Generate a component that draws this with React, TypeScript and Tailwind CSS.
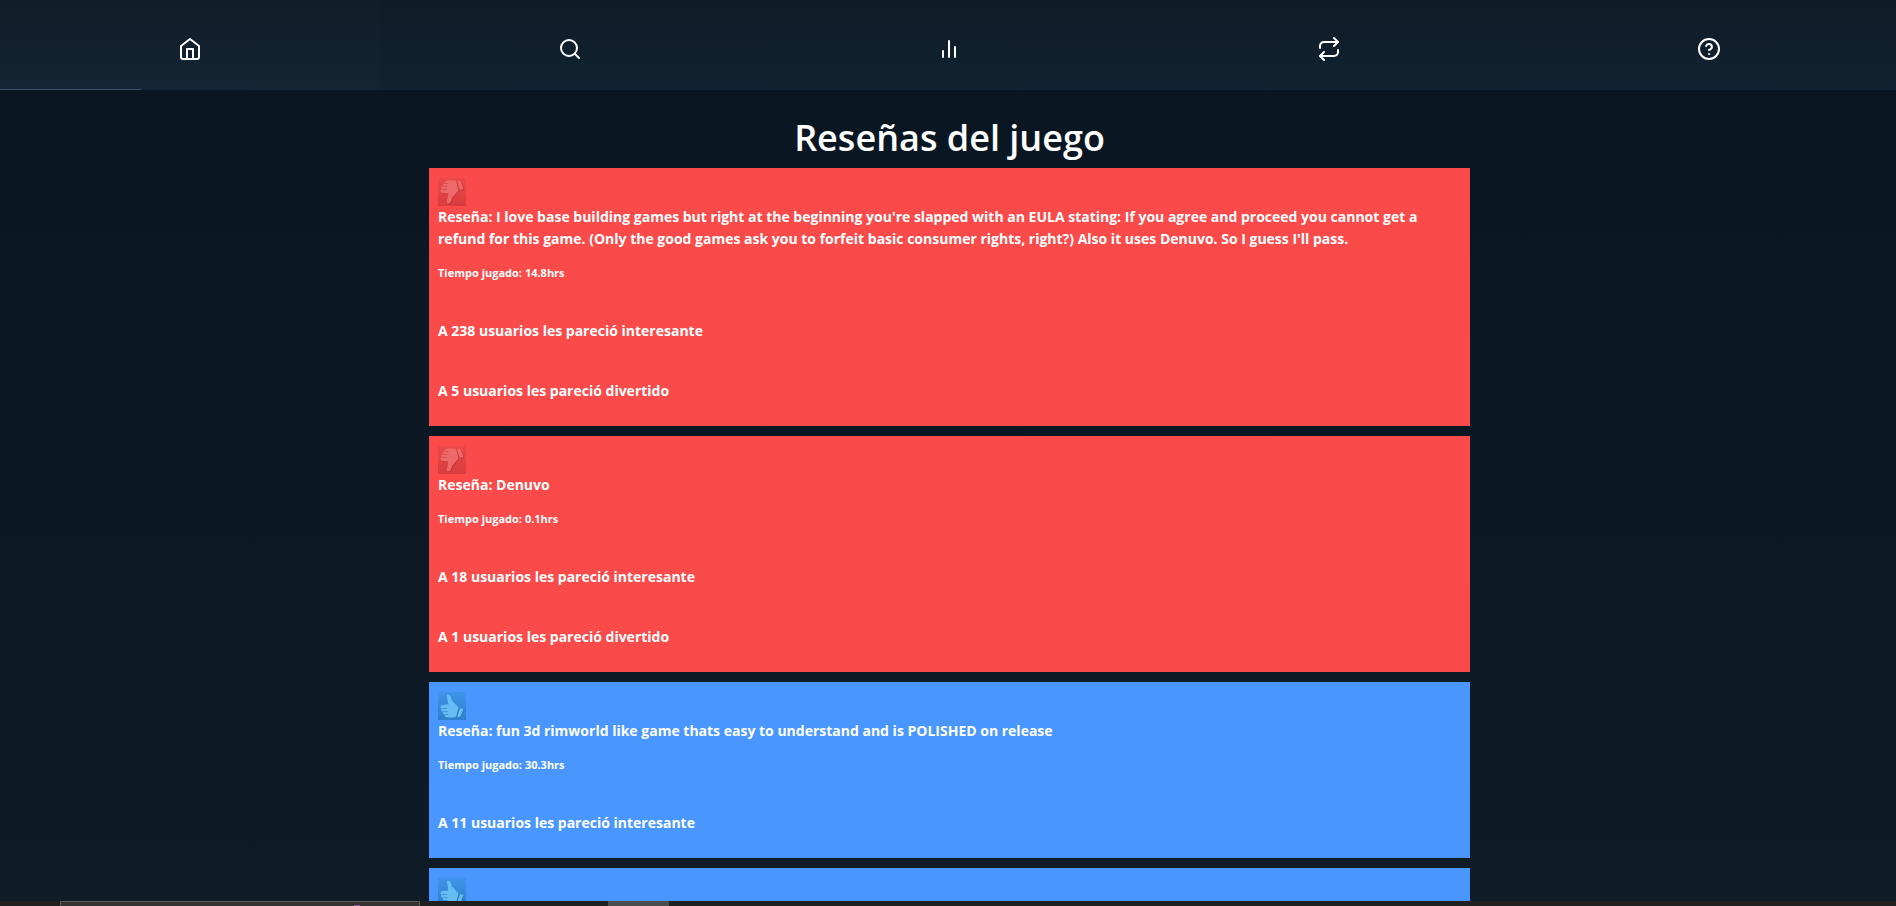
import React from "react";
import { FiBarChart2, FiHelpCircle, FiHome, FiRepeat, FiSearch } from "react-icons/fi";

type Review = {
  positive: boolean;
  text: string;
  hours: string;
  helpful: number;
  funny?: number;
};

const reviews: Review[] = [
  {
    positive: false,
    text: "I love base building games but right at the beginning you're slapped with an EULA stating: If you agree and proceed you cannot get a refund for this game. (Only the good games ask you to forfeit basic consumer rights, right?) Also it uses Denuvo. So I guess I'll pass.",
    hours: "14.8",
    helpful: 238,
    funny: 5,
  },
  { positive: false, text: "Denuvo", hours: "0.1", helpful: 18, funny: 1 },
  {
    positive: true,
    text: "fun 3d rimworld like game thats easy to understand and is POLISHED on release",
    hours: "30.3",
    helpful: 11,
  },
];

const links = [
  { label: "Inicio", Icon: FiHome },
  { label: "Buscar", Icon: FiSearch },
  { label: "Estadísticas", Icon: FiBarChart2 },
  { label: "Comparar", Icon: FiRepeat },
  { label: "Ayuda", Icon: FiHelpCircle },
];

const HAND =
  "M9 3C10.6 2.2 12.2 3 12.8 4.600L14.200 8.600L20.600 15.500L18 25C16 25.800 11.500 25.700 9 25.200C7 24.900 6.300 23.700 6.800 22.500C5 22.200 4.300 20.900 4.900 19.700C3.200 19.300 2.700 17.800 3.400 16.700C2 15.900 2.300 13.300 4.300 12.900L10.200 12.400C10.400 9.500 8.700 6 9 3Z";
const CUFF = "M22 16.300C23.200 16.100 24.500 16.500 25.500 17.100L22.500 24.600C21.400 25.200 20.200 25.300 19.200 25Z";

function Thumb({ up }: { up: boolean }) {
  return (
    <svg viewBox="0 0 28 28" className="block size-7" aria-hidden="true">
      <defs>
        <linearGradient id={up ? "thumb-up" : "thumb-down"} x1="0" y1="0" x2="0" y2="1">
          <stop offset="0" stopColor={up ? "#3f93ea" : "#ec4a4a"} />
          <stop offset="1" stopColor={up ? "#2f7fcb" : "#d83c3c"} />
        </linearGradient>
      </defs>
      <rect width="28" height="28" fill={up ? "url(#thumb-up)" : "url(#thumb-down)"} />
      <g transform={up ? undefined : "matrix(1 0 0 -1 0 28)"}>
        <g
          fill={up ? "#2a78c0" : "#c43639"}
          transform={up ? "translate(0.8 0.8)" : "translate(0.8 -0.8)"}
        >
          <path d={HAND} />
          <path d={CUFF} />
        </g>
        <g fill={up ? "#66bdf4" : "#ee6a6a"}>
          <path d={HAND} />
          <path d={CUFF} />
        </g>
        <path
          d="M3.400 16.500h5.600M4.900 19.600h4.600M6.800 22.500h3.400"
          stroke={up ? "#3d8fd8" : "#d84a4a"}
          strokeWidth="0.9"
        />
      </g>
    </svg>
  );
}

function ReviewCard({ review }: { review: Review }) {
  return (
    <article
      className={`px-[9px] pt-2.5 pb-6 text-sm/[22px] font-bold ${
        review.positive ? "bg-[#4997fe]" : "bg-[#fb4a4a]"
      }`}
    >
      <Thumb up={review.positive} />
      <p>Reseña: {review.text}</p>
      <p className="mt-3 text-[11px]/[22px]">Tiempo jugado: {review.hours}hrs</p>
      <p className="mt-9">A {review.helpful} usuarios les pareció interesante</p>
      {review.funny !== undefined && (
        <p className="mt-[38px]">A {review.funny} usuarios les pareció divertido</p>
      )}
    </article>
  );
}

export default function App() {
  return (
    <div className="flex h-screen flex-col overflow-hidden bg-linear-to-b from-[#091622] to-[#0f1c28] font-['Open_Sans','Noto_Sans',sans-serif] text-white">
      <nav className="relative -mr-[3px] grid h-[90px] shrink-0 grid-cols-5 bg-linear-to-b from-[#0f1c27] to-[#122232]">
        {links.map(({ label, Icon }, i) => (
          <a
            key={label}
            href="#"
            aria-label={label}
            className={`flex items-center justify-center pt-2 ${i === 0 ? "bg-white/[0.01]" : ""}`}
          >
            <Icon className="size-6" />
          </a>
        ))}
        <span className="absolute bottom-0 left-0 h-px w-[141px] bg-[#3a5162]" />
      </nav>
      <main className="-mr-[3px] flex min-h-0 flex-1 flex-col items-center overflow-hidden pt-6">
        <h1 className="mb-1.5 text-4xl/[48px] font-semibold">Reseñas del juego</h1>
        <div className="flex w-full max-w-[1041px] flex-col gap-2.5">
          {reviews.map((review) => (
            <ReviewCard key={review.helpful} review={review} />
          ))}
          <article className="bg-[#4997fe] px-[9px] pt-2.5 pb-6">
            <Thumb up />
          </article>
        </div>
      </main>
      <footer className="flex h-[5px] shrink-0 bg-[#202020]">
        <div className="ml-[60px] h-full w-[360px] border border-b-0 border-[#5a5a5a] bg-[#333333]">
          <div className="mt-[3px] ml-[293px] h-px w-1.5 bg-[#8a5a96]" />
        </div>
        <div className="ml-[188px] h-full w-[61px] bg-[#4c4c4c]" />
      </footer>
    </div>
  );
}
